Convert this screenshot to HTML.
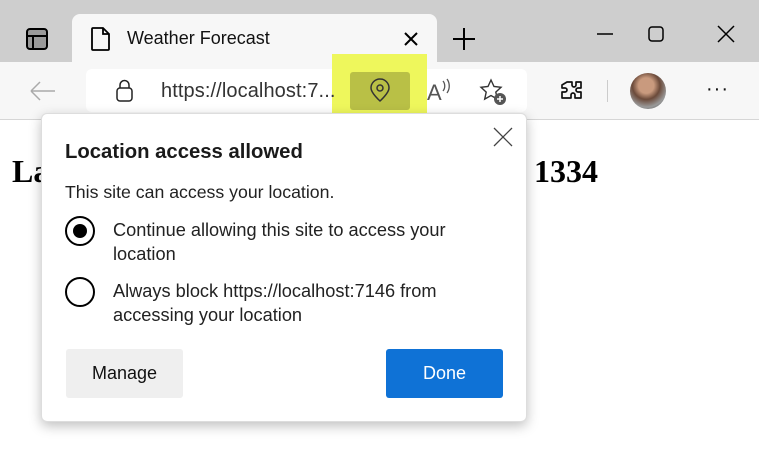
<!DOCTYPE html>
<html><head><style>
*{margin:0;padding:0;box-sizing:border-box}
body{width:759px;height:454px;overflow:hidden;background:#fff;font-family:"Liberation Sans",sans-serif;position:relative;color:#1a1a1a}
.abs{position:absolute}
</style></head><body>
<div class="abs" style="left:0;top:0;width:759px;height:62px;background:#cecece"></div>
<div class="abs" style="left:72px;top:14px;width:365px;height:50px;background:#f7f7f7;border-radius:8px 8px 0 0"></div>
<div class="abs" style="left:0;top:62px;width:759px;height:58px;background:#f7f7f7;border-bottom:1px solid #d6d6d6"></div>
<div class="abs" style="left:86px;top:69px;width:441px;height:43px;background:#fff;border-radius:6px"></div>
<svg class="abs" style="left:25px;top:27px" width="24" height="24"><rect x="2" y="2" width="20" height="20" rx="3" fill="#999" stroke="#000" stroke-width="2"/><rect x="3" y="8" width="18" height="2" fill="#000"/><rect x="7" y="8" width="2" height="14" fill="#000"/></svg>
<svg class="abs" style="left:90px;top:26px" width="22" height="26"><path d="M3 2h10l6 6v15a1 1 0 0 1-1 1H3a1 1 0 0 1-1-1V3a1 1 0 0 1 1-1z M13 2v6h6" fill="none" stroke="#000" stroke-width="1.8"/></svg>
<div class="abs" style="left:127px;top:28px;font-size:18px;color:#111">Weather Forecast</div>
<svg class="abs" style="left:404px;top:32px" width="14" height="14"><path d="M1 1l12 12M13 1L1 13" stroke="#000" stroke-width="2"/></svg>
<svg class="abs" style="left:452px;top:27px" width="24" height="24"><path d="M12 1v22M1 12h22" stroke="#000" stroke-width="2"/></svg>
<svg class="abs" style="left:595px;top:25px" width="150" height="20"><path d="M2 9h16" stroke="#000" stroke-width="1.5"/><rect x="54" y="2" width="14" height="14" rx="3" fill="none" stroke="#000" stroke-width="1.5"/><path d="M123 1l16 16M139 1l-16 16" stroke="#000" stroke-width="1.5"/></svg>
<svg class="abs" style="left:28px;top:80px" width="28" height="22"><path d="M3 11h24M3 11l9-9M3 11l9 9" stroke="#aaa" stroke-width="1.5" fill="none"/></svg>
<svg class="abs" style="left:115px;top:79px" width="20" height="24"><rect x="2" y="9" width="15" height="13" rx="3" fill="none" stroke="#222" stroke-width="1.5"/><path d="M5 9V6a4.5 4.5 0 0 1 9 0v3" fill="none" stroke="#222" stroke-width="1.5"/></svg>
<div class="abs" style="left:332px;top:54px;width:95px;height:76px;background:#eef75c"></div>
<div class="abs" style="left:350px;top:72px;width:60px;height:38px;background:#b9c046;border-radius:3px"></div>
<div class="abs" style="left:161px;top:80px;font-size:20px;letter-spacing:0.1px;color:#333;white-space:nowrap">https://localhost:7...</div>
<svg class="abs" style="left:368px;top:78px" width="24" height="26"><path d="M12 23s-9-8-9-13a9 9 0 0 1 18 0c0 5-9 13-9 13z" fill="none" stroke="#333" stroke-width="1.5"/><circle cx="12" cy="10" r="3" fill="none" stroke="#333" stroke-width="1.5"/></svg>
<div class="abs" style="left:427px;top:80px;font-size:22px;color:#555">A</div>
<svg class="abs" style="left:440px;top:78px" width="14" height="16"><path d="M3 3a8 8 0 0 1 0 10M7 1a12 12 0 0 1 0 14" fill="none" stroke="#555" stroke-width="1.3"/></svg>
<svg class="abs" style="left:479px;top:78px" width="30" height="30"><path d="M12 2l3 6.5 7 .8-5.2 4.8 1.5 7-6.3-3.6-6.3 3.6 1.5-7L2 9.3l7-.8z" fill="none" stroke="#333" stroke-width="1.4"/><circle cx="21" cy="21" r="6" fill="#555"/><path d="M21 18v6M18 21h6" stroke="#fff" stroke-width="1.5"/></svg>
<svg class="abs" style="left:558px;top:79px" width="26" height="26"><path d="M9 3h5v3a2 2 0 0 0 4 0V3h0v0h5v6h-3a2 2 0 0 0 0 4h3v6h-6v-3a2 2 0 0 0-4 0v3H4v-6h3a2 2 0 0 0 0-4H4V6z" fill="none" stroke="#111" stroke-width="1.7" stroke-linejoin="round"/></svg>
<div class="abs" style="left:607px;top:80px;width:1px;height:22px;background:#ccc"></div>
<div class="abs" style="left:630px;top:73px;width:36px;height:36px;border-radius:50%;background:radial-gradient(circle at 45% 35%,#c99a7e 0 25%,#6b4a3a 45%,#9a9a9a 70%,#444 100%)"></div>
<div class="abs" style="left:706px;top:78px;font-size:20px;color:#111;letter-spacing:1px">···</div>
<div class="abs" style="left:12px;top:153px;font-family:'Liberation Serif',serif;font-weight:bold;font-size:32px;color:#000">La</div>
<div class="abs" style="left:534px;top:153px;font-family:'Liberation Serif',serif;font-weight:bold;font-size:32px;color:#000">1334</div>
<div class="abs" style="left:41px;top:113px;width:486px;height:309px;background:#fff;border:1px solid #ddd;border-radius:6px;box-shadow:0 4px 12px rgba(0,0,0,.25)"></div>
<svg class="abs" style="left:493px;top:127px" width="20" height="20"><path d="M1 1l18 18M19 1L1 19" stroke="#444" stroke-width="1.3"/></svg>
<div class="abs" style="left:65px;top:141px;font-size:20.3px;font-weight:bold;color:#1a1a1a">Location access allowed</div>
<div class="abs" style="left:65px;top:182px;font-size:17.7px;color:#222">This site can access your location.</div>
<div class="abs" style="left:65px;top:216px;width:30px;height:30px;border:2px solid #000;border-radius:50%"></div>
<div class="abs" style="left:73px;top:224px;width:14px;height:14px;background:#000;border-radius:50%"></div>
<div class="abs" style="left:113px;top:218px;font-size:18.2px;line-height:24px;color:#222;white-space:nowrap">Continue allowing this site to access your<br>location</div>
<div class="abs" style="left:65px;top:277px;width:30px;height:30px;border:2px solid #000;border-radius:50%"></div>
<div class="abs" style="left:113px;top:279px;font-size:18.2px;line-height:24px;color:#222;white-space:nowrap">Always block https://localhost:7146 from<br>accessing your location</div>
<div class="abs" style="left:66px;top:349px;width:117px;height:49px;background:#efefef;border-radius:3px;text-align:center;line-height:49px;font-size:18px;color:#111">Manage</div>
<div class="abs" style="left:386px;top:349px;width:117px;height:49px;background:#0f72d6;border-radius:3px;text-align:center;line-height:49px;font-size:18px;color:#fff">Done</div>
</body></html>
